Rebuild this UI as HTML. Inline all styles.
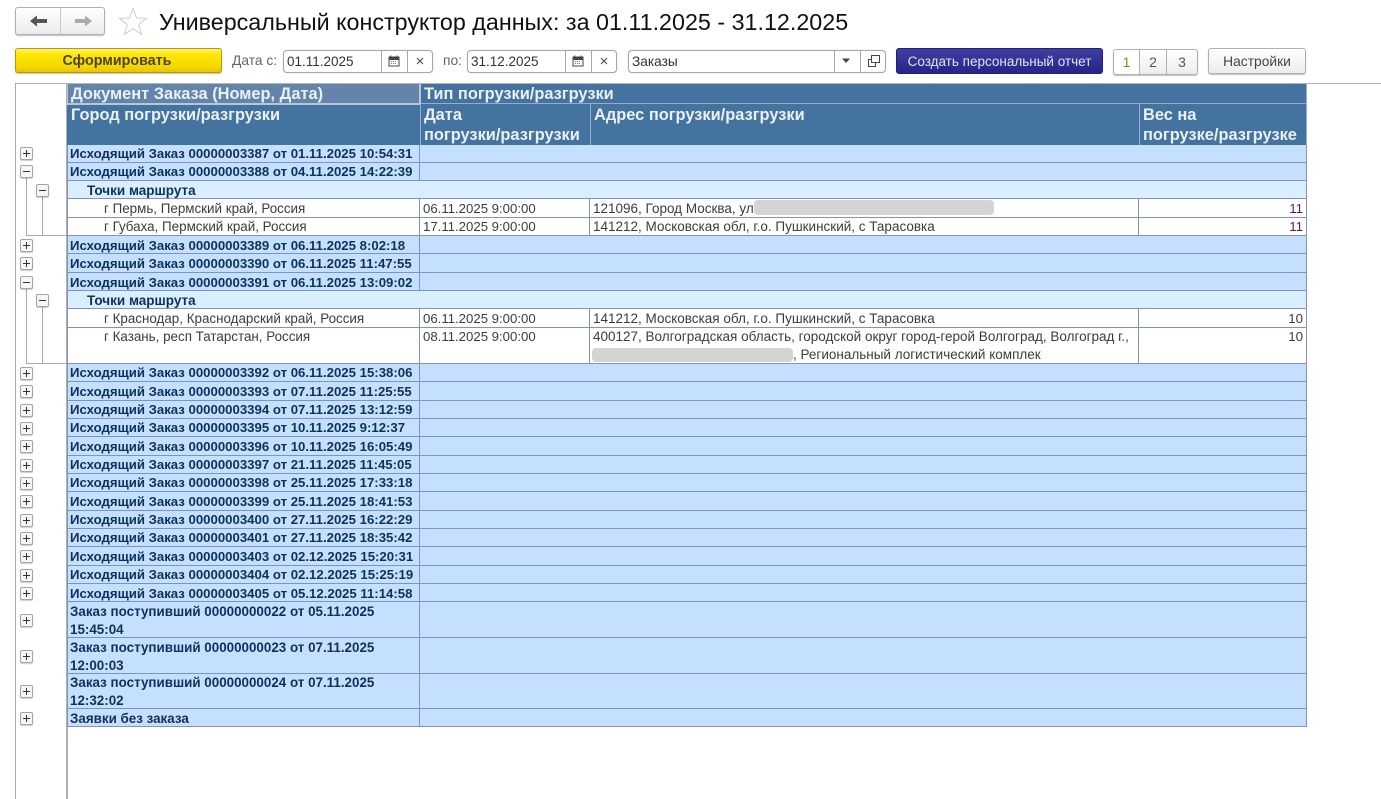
<!DOCTYPE html>
<html lang="ru"><head><meta charset="utf-8"><title>Универсальный конструктор данных</title>
<style>
html,body{margin:0;padding:0;background:#fff}
body{width:1381px;height:799px;overflow:hidden;font-family:"Liberation Sans",sans-serif}
#w{position:relative;width:1381px;height:799px;overflow:hidden;filter:blur(.35px)}
.a{position:absolute;box-sizing:border-box}
.title{left:159px;top:7px;font-size:23.3px;line-height:30px;color:#111;white-space:nowrap}
.btn{border:1px solid #b0b0b0;border-radius:3px;background:linear-gradient(#fff,#ececec);box-shadow:0 1px 1px rgba(0,0,0,.25);color:#444;text-align:center;font-size:13.8px}
.fld{border:1px solid #a8a8a8;border-radius:4px;background:#fff;height:23px;box-shadow:0 0 1px #bbb}
.fld span{position:absolute;left:3px;top:3px;font-size:13.5px;line-height:16px;color:#333;white-space:nowrap}
.fld i{position:absolute;top:0;bottom:0;width:1px;background:#a8a8a8}
.lbl{font-size:13.8px;line-height:16px;color:#666;white-space:nowrap}
.r{position:absolute;left:67px;width:1240px;display:flex;box-sizing:border-box;font-size:13.3px;line-height:18px}
.r>div{box-sizing:border-box;border-right:1px solid #8490c0;border-bottom:1px solid #8490c0;padding:0 3px;overflow:hidden;white-space:nowrap}
.r>div:first-child{border-left:1px solid #8490c0;padding-left:2px}
.c1{width:353px}.c2{width:170px;font-size:13.2px}.c3{width:549px;font-size:13.5px}.c4{width:168px;text-align:right}.w{width:887px}
.g{color:#10305c;font-weight:bold;font-size:13.2px}.g>div{background:#c5e0ff}
.g.z{font-size:13.4px}
.s{color:#10305c;font-weight:bold;font-size:13.5px}.s>div{background:#d9eeff;width:1240px}
.r.s>div:first-child{padding-left:19px}
.d{color:#3c3c3c}.d>div{background:#fff}.d .c1{font-size:13.4px}.r.d>div:first-child{padding-left:36px}
.r.u>div{padding-top:1px}
.h{background:#44739f;color:#e9f1f8;font-weight:bold;font-size:16.4px;line-height:18px;white-space:nowrap}
.p{width:13px;height:13px;border:1px solid #a5a5a5;border-radius:2px;background:#f6f6f6;box-shadow:0 1px 1px rgba(0,0,0,.2)}
.p:before{content:"";position:absolute;left:2px;right:2px;top:5px;height:1px;background:#333}
.p.t:after{content:"";position:absolute;top:2px;bottom:2px;left:5px;width:1px;background:#333}
.l{background:#aaa}
.x{background:#d4d4d4;border-radius:4px}
</style></head><body><div id="w">

<!-- top bar -->
<div class="a btn" style="left:15px;top:7px;width:90px;height:28px"></div>
<div class="a" style="left:60px;top:8px;width:1px;height:26px;background:#c8c8c8"></div>
<svg class="a" style="left:29px;top:13px" width="20" height="16"><path d="M1 8 L8 2.5 V6 H18 V10 H8 V13.5 Z" fill="#555"/></svg>
<svg class="a" style="left:73px;top:13px" width="20" height="16"><path d="M19 8 L12 2.5 V6 H2 V10 H12 V13.5 Z" fill="#aaa"/></svg>
<svg class="a" style="left:118px;top:7px" width="30" height="29"><path d="M15 1.5 L18.6 11 L28.5 11.3 L20.7 17.6 L23.5 27.3 L15 21.7 L6.5 27.3 L9.3 17.6 L1.5 11.3 L11.4 11 Z" fill="#fff" stroke="#c8ccd4" stroke-width="1"/></svg>
<div class="a title">Универсальный конструктор данных: за 01.11.2025 - 31.12.2025</div>

<!-- filter bar -->
<div class="a" style="left:15px;top:48px;width:207px;height:25px;border:1px solid #b59a10;border-radius:3px;background:linear-gradient(#fff176 0,#ffe600 25%,#f5d800 75%,#e8c600);box-shadow:0 1px 1px rgba(0,0,0,.25);text-align:center;font-size:14.3px;line-height:25px;padding-right:3px;font-weight:bold;color:#4a4420">Сформировать</div>
<div class="a lbl" style="left:232px;top:53px">Дата с:</div>
<div class="a fld" style="left:283px;top:50px;width:150px"><span>01.11.2025</span><i style="left:97px"></i><i style="left:123px"></i></div>
<svg class="a" style="left:388px;top:55px" width="12" height="12"><path d="M1 2.5 H11 V11 H1 Z" fill="#fff" stroke="#444"/><path d="M1 2 H11 V4.5 H1 Z M3 .5 V3 M9 .5 V3" fill="#444" stroke="#444"/><path d="M3 6.5 H9 M3 8.5 H9" stroke="#777" stroke-dasharray="1 1"/></svg>
<svg class="a" style="left:416px;top:57px" width="8" height="8"><path d="M1 1 L7 7 M7 1 L1 7" stroke="#555" stroke-width="1.2"/></svg>
<div class="a lbl" style="left:443px;top:53px">по:</div>
<div class="a fld" style="left:467px;top:50px;width:150px"><span>31.12.2025</span><i style="left:97px"></i><i style="left:123px"></i></div>
<svg class="a" style="left:572px;top:55px" width="12" height="12"><path d="M1 2.5 H11 V11 H1 Z" fill="#fff" stroke="#444"/><path d="M1 2 H11 V4.5 H1 Z M3 .5 V3 M9 .5 V3" fill="#444" stroke="#444"/><path d="M3 6.5 H9 M3 8.5 H9" stroke="#777" stroke-dasharray="1 1"/></svg>
<svg class="a" style="left:600px;top:57px" width="8" height="8"><path d="M1 1 L7 7 M7 1 L1 7" stroke="#555" stroke-width="1.2"/></svg>
<div class="a fld" style="left:628px;top:50px;width:258px"><span style="font-size:13.7px">Заказы</span><i style="left:205px"></i><i style="left:231px"></i></div>
<svg class="a" style="left:842px;top:58px" width="8" height="6"><path d="M0 .5 H8 L4 5 Z" fill="#444"/></svg>
<svg class="a" style="left:867px;top:54px" width="14" height="14"><path d="M4.5 1.5 H12.5 V8.5 H4.5 Z" fill="none" stroke="#444"/><path d="M4.5 5.5 H1.5 V12.5 H8.5 V8.5" fill="none" stroke="#444"/></svg>
<div class="a" style="left:896px;top:48px;width:207px;height:26px;border:1px solid #20207a;border-radius:3px;background:linear-gradient(#3f3fa0,#25258a);text-align:center;font-size:13.5px;line-height:25px;color:#dfe3f5;white-space:nowrap">Создать персональный отчет</div>
<div class="a btn" style="left:1113px;top:49px;width:85px;height:26px"></div>
<div class="a" style="left:1114px;top:50px;width:25px;height:24px;background:#fff;text-align:center;font-size:14px;line-height:25px;color:#a87a30;border-radius:3px 0 0 3px">1</div>
<div class="a" style="left:1139px;top:50px;width:1px;height:24px;background:#b0b0b0"></div>
<div class="a" style="left:1140px;top:50px;width:26px;height:24px;text-align:center;font-size:14px;line-height:25px;color:#555">2</div>
<div class="a" style="left:1166px;top:50px;width:1px;height:24px;background:#b0b0b0"></div>
<div class="a" style="left:1167px;top:50px;width:30px;height:24px;text-align:center;font-size:14px;line-height:25px;color:#555">3</div>
<div class="a btn" style="left:1208px;top:48px;width:98px;height:26px;line-height:25px">Настройки</div>

<!-- frame -->
<div class="a" style="left:15px;top:83px;width:1366px;height:1px;background:#b4b4b4"></div>
<div class="a" style="left:15px;top:83px;width:1px;height:716px;background:#aaa"></div>
<div class="a" style="left:66px;top:83px;width:2px;height:716px;background:#b0b0b0"></div>

<!-- header -->
<div class="a h" style="left:67px;top:84px;width:1240px;height:61px"></div>
<div class="a h" style="left:67px;top:84px;width:354px;height:21px;background:#6485a9;border:1px solid #b7c7da;border-width:0 2px 2px 1px;padding:1px 3px 0">Документ Заказа (Номер, Дата)</div>
<div class="a h" style="left:424px;top:85px;background:none">Тип погрузки/разгрузки</div>
<div class="a" style="left:421px;top:103px;width:886px;height:1px;background:#93add0"></div>
<div class="a h" style="left:71px;top:106px;background:none">Город погрузки/разгрузки</div>
<div class="a h" style="left:424px;top:105px;background:none;line-height:20px">Дата<br>погрузки/разгрузки</div>
<div class="a h" style="left:594px;top:106px;background:none">Адрес погрузки/разгрузки</div>
<div class="a h" style="left:1143px;top:105px;background:none;line-height:20px">Вес на<br>погрузке/разгрузке</div>
<div class="a" style="left:420px;top:104px;width:1px;height:41px;background:#93add0"></div>
<div class="a" style="left:590px;top:104px;width:1px;height:41px;background:#93add0"></div>
<div class="a" style="left:1139px;top:104px;width:1px;height:41px;background:#93add0"></div>
<div class="a" style="left:1306px;top:84px;width:1px;height:61px;background:#93add0"></div>

<!-- rows -->
<div class="r g" style="top:145px;height:18px"><div class="c1">Исходящий Заказ 00000003387 от 01.11.2025 10:54:31</div><div class="w"></div></div>
<div class="r g" style="top:163px;height:18px"><div class="c1">Исходящий Заказ 00000003388 от 04.11.2025 14:22:39</div><div class="w"></div></div>
<div class="r s u" style="top:181px;height:18px"><div>Точки маршрута</div></div>
<div class="r d u" style="top:199px;height:19px"><div class="c1">г Пермь, Пермский край, Россия</div><div class="c2">06.11.2025 9:00:00</div><div class="c3">121096, Город Москва, ул</div><div class="c4" style="color:#5c1a60">11</div></div>
<div class="r d" style="top:218px;height:18px"><div class="c1">г Губаха, Пермский край, Россия</div><div class="c2">17.11.2025 9:00:00</div><div class="c3">141212, Московская обл, г.о. Пушкинский, с Тарасовка</div><div class="c4" style="color:#5c1a60">11</div></div>
<div class="r g u" style="top:236px;height:18px"><div class="c1">Исходящий Заказ 00000003389 от 06.11.2025 8:02:18</div><div class="w"></div></div>
<div class="r g u" style="top:254px;height:19px"><div class="c1">Исходящий Заказ 00000003390 от 06.11.2025 11:47:55</div><div class="w"></div></div>
<div class="r g u" style="top:273px;height:18px"><div class="c1">Исходящий Заказ 00000003391 от 06.11.2025 13:09:02</div><div class="w"></div></div>
<div class="r s u" style="top:291px;height:18px"><div>Точки маршрута</div></div>
<div class="r d u" style="top:309px;height:19px"><div class="c1">г Краснодар, Краснодарский край, Россия</div><div class="c2">06.11.2025 9:00:00</div><div class="c3">141212, Московская обл, г.о. Пушкинский, с Тарасовка</div><div class="c4">10</div></div>
<div class="r d" style="top:328px;height:36px"><div class="c1">г Казань, респ Татарстан, Россия</div><div class="c2">08.11.2025 9:00:00</div><div class="c3">400127, Волгоградская область, городской округ город-герой Волгоград, Волгоград г.,<br><span style="margin-left:200px">, Региональный логистический комплек</span></div><div class="c4">10</div></div>
<div class="r g" style="top:364px;height:18px"><div class="c1">Исходящий Заказ 00000003392 от 06.11.2025 15:38:06</div><div class="w"></div></div>
<div class="r g u" style="top:382px;height:19px"><div class="c1">Исходящий Заказ 00000003393 от 07.11.2025 11:25:55</div><div class="w"></div></div>
<div class="r g" style="top:401px;height:18px"><div class="c1">Исходящий Заказ 00000003394 от 07.11.2025 13:12:59</div><div class="w"></div></div>
<div class="r g" style="top:419px;height:18px"><div class="c1">Исходящий Заказ 00000003395 от 10.11.2025 9:12:37</div><div class="w"></div></div>
<div class="r g u" style="top:437px;height:19px"><div class="c1">Исходящий Заказ 00000003396 от 10.11.2025 16:05:49</div><div class="w"></div></div>
<div class="r g" style="top:456px;height:18px"><div class="c1">Исходящий Заказ 00000003397 от 21.11.2025 11:45:05</div><div class="w"></div></div>
<div class="r g" style="top:474px;height:18px"><div class="c1">Исходящий Заказ 00000003398 от 25.11.2025 17:33:18</div><div class="w"></div></div>
<div class="r g u" style="top:492px;height:19px"><div class="c1">Исходящий Заказ 00000003399 от 25.11.2025 18:41:53</div><div class="w"></div></div>
<div class="r g" style="top:511px;height:18px"><div class="c1">Исходящий Заказ 00000003400 от 27.11.2025 16:22:29</div><div class="w"></div></div>
<div class="r g" style="top:529px;height:18px"><div class="c1">Исходящий Заказ 00000003401 от 27.11.2025 18:35:42</div><div class="w"></div></div>
<div class="r g u" style="top:547px;height:19px"><div class="c1">Исходящий Заказ 00000003403 от 02.12.2025 15:20:31</div><div class="w"></div></div>
<div class="r g" style="top:566px;height:18px"><div class="c1">Исходящий Заказ 00000003404 от 02.12.2025 15:25:19</div><div class="w"></div></div>
<div class="r g u" style="top:584px;height:18px"><div class="c1">Исходящий Заказ 00000003405 от 05.12.2025 11:14:58</div><div class="w"></div></div>
<div class="r g z u" style="top:602px;height:36px"><div class="c1">Заказ поступивший 00000000022 от 05.11.2025<br>15:45:04</div><div class="w"></div></div>
<div class="r g z u" style="top:638px;height:36px"><div class="c1">Заказ поступивший 00000000023 от 07.11.2025<br>12:00:03</div><div class="w"></div></div>
<div class="r g z" style="top:674px;height:35px"><div class="c1">Заказ поступивший 00000000024 от 07.11.2025<br>12:32:02</div><div class="w"></div></div>
<div class="r g z u" style="top:709px;height:18px"><div class="c1">Заявки без заказа</div><div class="w"></div></div>

<div class="a x" style="left:754px;top:200px;width:240px;height:15px"></div>
<div class="a x" style="left:592px;top:348px;width:201px;height:14px"></div>

<!-- tree lines -->
<div class="a l" style="left:26px;top:177px;width:1px;height:59px"></div>
<div class="a l" style="left:42px;top:196px;width:1px;height:40px"></div>
<div class="a l" style="left:26px;top:235px;width:41px;height:1px"></div>
<div class="a l" style="left:26px;top:288px;width:1px;height:76px"></div>
<div class="a l" style="left:42px;top:306px;width:1px;height:58px"></div>
<div class="a l" style="left:26px;top:363px;width:41px;height:1px"></div>

<!-- tree toggles -->
<div class="a p t" style="left:20px;top:147px"></div>
<div class="a p" style="left:20px;top:165px"></div>
<div class="a p" style="left:36px;top:184px"></div>
<div class="a p t" style="left:20px;top:239px"></div>
<div class="a p t" style="left:20px;top:257px"></div>
<div class="a p" style="left:20px;top:276px"></div>
<div class="a p" style="left:36px;top:294px"></div>
<div class="a p t" style="left:20px;top:367px"></div>
<div class="a p t" style="left:20px;top:385px"></div>
<div class="a p t" style="left:20px;top:404px"></div>
<div class="a p t" style="left:20px;top:422px"></div>
<div class="a p t" style="left:20px;top:440px"></div>
<div class="a p t" style="left:20px;top:459px"></div>
<div class="a p t" style="left:20px;top:477px"></div>
<div class="a p t" style="left:20px;top:495px"></div>
<div class="a p t" style="left:20px;top:514px"></div>
<div class="a p t" style="left:20px;top:532px"></div>
<div class="a p t" style="left:20px;top:550px"></div>
<div class="a p t" style="left:20px;top:569px"></div>
<div class="a p t" style="left:20px;top:587px"></div>
<div class="a p t" style="left:20px;top:614px"></div>
<div class="a p t" style="left:20px;top:650px"></div>
<div class="a p t" style="left:20px;top:685px"></div>
<div class="a p t" style="left:20px;top:712px"></div>
</div></body></html>
